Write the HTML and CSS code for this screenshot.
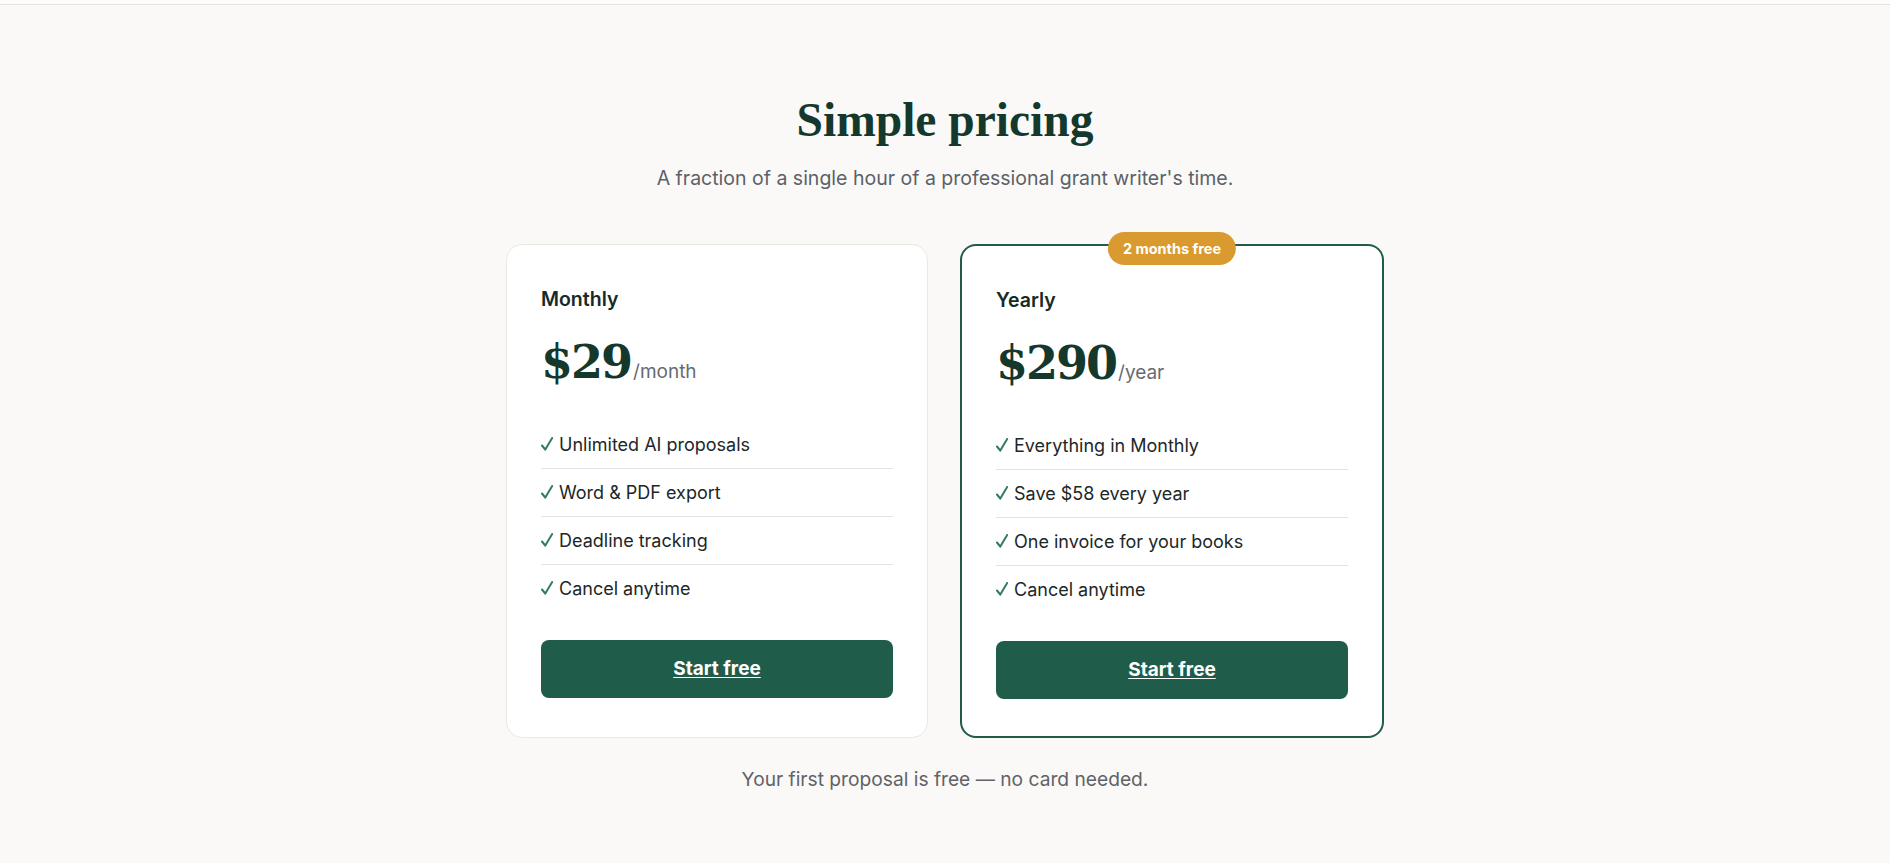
FILE: index.html
```html
<!DOCTYPE html>
<html lang="en">
<head>
  <meta charset="UTF-8">
  <meta name="viewport" content="width=device-width, initial-scale=1.0">
  <title>Pricing</title>
  <link rel="stylesheet" href="styles.css">
</head>
<body>
  <div class="topbar"></div>

  <section class="pricing">
    <h2>Simple pricing</h2>
    <p class="lead">A fraction of a single hour of a professional grant writer's time.</p>

    <div class="plans">
      <!-- Monthly plan -->
      <div class="plan">
        <h3>Monthly</h3>
        <div class="price"><span class="amount">$29</span><span class="per">/month</span></div>
        <ul class="features">
          <li><svg class="check" viewBox="0 0 12 14"><path d="M1 8.5 L4.3 12.6 L11.2 1"/></svg>Unlimited AI proposals</li>
          <li><svg class="check" viewBox="0 0 12 14"><path d="M1 8.5 L4.3 12.6 L11.2 1"/></svg>Word &amp; PDF export</li>
          <li><svg class="check" viewBox="0 0 12 14"><path d="M1 8.5 L4.3 12.6 L11.2 1"/></svg>Deadline tracking</li>
          <li><svg class="check" viewBox="0 0 12 14"><path d="M1 8.5 L4.3 12.6 L11.2 1"/></svg>Cancel anytime</li>
        </ul>
        <a class="btn" href="#">Start free</a>
      </div>

      <!-- Yearly plan -->
      <div class="plan featured">
        <span class="badge">2 months free</span>
        <h3>Yearly</h3>
        <div class="price"><span class="amount">$290</span><span class="per">/year</span></div>
        <ul class="features">
          <li><svg class="check" viewBox="0 0 12 14"><path d="M1 8.5 L4.3 12.6 L11.2 1"/></svg>Everything in Monthly</li>
          <li><svg class="check" viewBox="0 0 12 14"><path d="M1 8.5 L4.3 12.6 L11.2 1"/></svg>Save $58 every year</li>
          <li><svg class="check" viewBox="0 0 12 14"><path d="M1 8.5 L4.3 12.6 L11.2 1"/></svg>One invoice for your books</li>
          <li><svg class="check" viewBox="0 0 12 14"><path d="M1 8.5 L4.3 12.6 L11.2 1"/></svg>Cancel anytime</li>
        </ul>
        <a class="btn" href="#">Start free</a>
      </div>
    </div>

    <p class="note">Your first proposal is free — no card needed.</p>
  </section>
</body>
</html>
```

FILE: styles.css
```css
* {
  box-sizing: border-box;
}

body {
  margin: 0;
  background-color: #faf9f7;
  font-family: Inter, 'Noto Sans', sans-serif;
  color: #1c2727;
}

.topbar {
  height: 5px;
  background: #fdfcfb;
  border-bottom: 1px solid #e4e2de;
}

.pricing {
  padding-top: 87px;
  display: flex;
  flex-direction: column;
  align-items: center;
}

h2 {
  margin: 0;
  font-family: 'Liberation Serif', serif;
  font-weight: 700;
  font-size: 47.5px;
  line-height: 1.2;
  color: #15382d;
}

.lead {
  margin: 15px 0 0;
  font-size: 19.5px;
  line-height: 1.45;
  color: #5b6168;
}

.plans {
  display: flex;
  gap: 32px;
  width: 878px;
  margin-top: 52px;
}

.plan {
  flex: 1;
  position: relative;
  display: flex;
  flex-direction: column;
  background: #ffffff;
  border: 1px solid #ebe8e3;
  border-radius: 16px;
  padding: 40px 34px 37px;
}

.plan.featured {
  border: 2px solid #1f5c4a;
}

.badge {
  position: absolute;
  top: -14px;
  left: 50%;
  transform: translateX(-50%);
  background: #d99a2f;
  color: #ffffff;
  font-size: 14.5px;
  font-weight: 700;
  line-height: 19px;
  padding: 7px 15px;
  border-radius: 999px;
  white-space: nowrap;
}

h3 {
  margin: 0;
  font-size: 19.5px;
  font-weight: 600;
  line-height: 1.45;
  color: #172a26;
}

.price {
  display: flex;
  align-items: baseline;
  margin-top: 25px;
}

.amount {
  font-family: 'DejaVu Serif', serif;
  font-weight: 700;
  font-size: 46px;
  line-height: 1;
  letter-spacing: -2px;
  color: #15382d;
}

.per {
  margin-left: 2px;
  font-size: 19px;
  color: #676b70;
}

.features {
  list-style: none;
  margin: 36px 0 0;
  padding: 0;
}

.features li {
  display: flex;
  align-items: baseline;
  padding: 10px 0;
  font-size: 18px;
  line-height: 1.5;
  border-bottom: 1px solid #e6e3de;
}

.features li:last-child {
  border-bottom: none;
}

.check {
  width: 12px;
  height: 14px;
  margin-right: 6px;
  flex-shrink: 0;
  align-self: center;
  fill: none;
  stroke: #2f7a60;
  stroke-width: 2;
  stroke-linecap: round;
  stroke-linejoin: round;
}

.btn {
  display: block;
  margin-top: 28px;
  padding: 18px 0;
  background: #1f5c4a;
  color: #ffffff;
  text-align: center;
  font-size: 19px;
  font-weight: 700;
  line-height: 22px;
  border-radius: 8px;
  text-decoration: underline;
  text-underline-offset: 2px;
}

.note {
  margin: 28px 0 0;
  font-size: 19.2px;
  line-height: 1.45;
  color: #5f6368;
}
```
